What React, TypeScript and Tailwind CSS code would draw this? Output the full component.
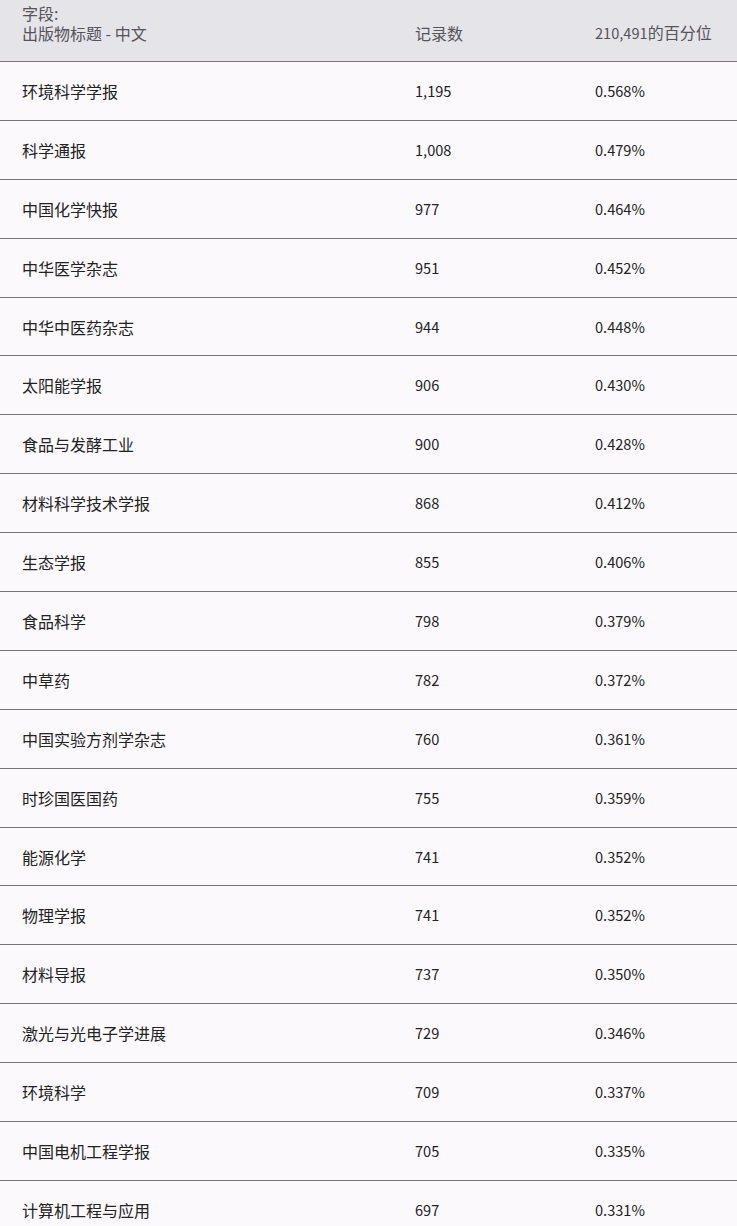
const rows: [string, string, string][] = [
  ['环境科学学报', '1,195', '0.568%'],
  ['科学通报', '1,008', '0.479%'],
  ['中国化学快报', '977', '0.464%'],
  ['中华医学杂志', '951', '0.452%'],
  ['中华中医药杂志', '944', '0.448%'],
  ['太阳能学报', '906', '0.430%'],
  ['食品与发酵工业', '900', '0.428%'],
  ['材料科学技术学报', '868', '0.412%'],
  ['生态学报', '855', '0.406%'],
  ['食品科学', '798', '0.379%'],
  ['中草药', '782', '0.372%'],
  ['中国实验方剂学杂志', '760', '0.361%'],
  ['时珍国医国药', '755', '0.359%'],
  ['能源化学', '741', '0.352%'],
  ['物理学报', '741', '0.352%'],
  ['材料导报', '737', '0.350%'],
  ['激光与光电子学进展', '729', '0.346%'],
  ['环境科学', '709', '0.337%'],
  ['中国电机工程学报', '705', '0.335%'],
  ['计算机工程与应用', '697', '0.331%'],
]

export default function App() {
  return (
    <div className="w-[737px] h-[1226px] overflow-hidden bg-[#fcf9fd] font-['Noto_Sans_CJK_SC',sans-serif] text-[16px]">
      {/* 表头 */}
      <div className="h-[62px] bg-[#e5e4e9] border-b border-[#77747a] flex items-end pb-[18px] text-[#55535a] leading-[20px]">
        <div className="w-[415px] pl-[22px]">
          <div>字段:</div>
          <div>出版物标题 - 中文</div>
        </div>
        <div className="w-[180px]">记录数</div>
        <div>
          <span className="text-[14.6px]">210,491</span>的百分位
        </div>
      </div>
      {rows.map(([name, count, pct], i) => (
        <div key={i} className="h-[58.9px] border-b border-[#77747a] flex items-center text-[#222]">
          <div className="w-[415px] pl-[22px]">{name}</div>
          <div className="w-[180px] text-[14.6px]">{count}</div>
          <div className="text-[14.6px]">{pct}</div>
        </div>
      ))}
    </div>
  )
}
